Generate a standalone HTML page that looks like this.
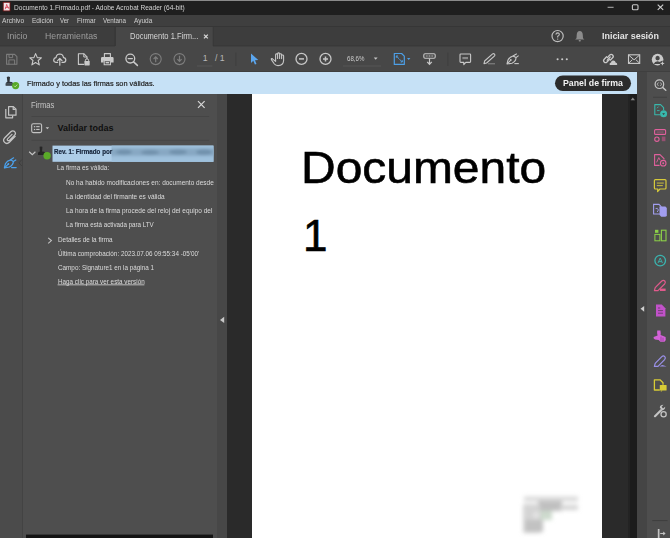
<!DOCTYPE html>
<html><head><meta charset="utf-8">
<style>
*{margin:0;padding:0;box-sizing:border-box}
html,body{width:670px;height:538px;overflow:hidden;background:#2a2a2a;font-family:"Liberation Sans",sans-serif;position:relative}
.a{position:absolute}
#topline{left:0;top:0;width:670px;height:1px;background:#8a8a8a}
#title{left:0;top:1px;width:670px;height:14px;background:#1f1f1f}
#menu{left:0;top:15px;width:670px;height:11px;background:#3f3f3f}
#tabs{left:0;top:26px;width:670px;height:20px;background:#3d3d3d;border-top:1px solid #363636}
#acttab{left:115.5px;top:27px;width:98px;height:19px;background:#474747}
#tool{left:0;top:46px;width:670px;height:26px;background:#474747}
#notif{left:0;top:72px;width:637px;height:21.5px;background:#c6e1f6}
#rail{left:0;top:93.5px;width:23px;height:445px;background:#4b4b4b;border-right:1px solid #434343}
#panel{left:23px;top:93.5px;width:194px;height:445px;background:#4e4e4e;overflow:hidden}
#strip{left:217px;top:93.5px;width:10px;height:445px;background:#474747}
#page{left:252px;top:93.5px;width:350px;height:445px;background:#fff}
#scroll{left:628.3px;top:93.5px;width:8.9px;height:445px;background:#1c1c1c;border-left:2.5px solid #232323}
#rrail1{left:637px;top:72px;width:10.3px;height:466px;background:#454545}
#rrail{left:647.3px;top:72px;width:23px;height:466px;background:#4e4e4e}
.t{position:absolute;white-space:nowrap;line-height:1;transform-origin:0 0}
svg.i{position:absolute;overflow:visible}
</style></head><body>
<div class="a" id="topline"></div>
<div class="a" id="title"></div>
<div class="a" id="menu"></div>
<div class="a" id="tabs"></div>
<div class="a" id="acttab"></div>
<div class="a" id="tool"></div>
<div class="a" id="notif"></div>
<div class="a" id="rail"></div>
<div class="a" id="panel"></div>
<div class="a" id="strip"></div>
<div class="a" id="page"></div>
<div class="a" id="scroll"></div>
<div class="a" id="rrail1"></div>
<div class="a" id="rrail"></div>
<svg class="i" id="bgsvg" style="left:0;top:0" width="670" height="538" viewBox="0 0 670 538">
<!-- tab borders -->
<rect x="114.6" y="27" width="1" height="19" fill="#363636"/>
<rect x="212.8" y="27" width="1" height="19" fill="#363636"/>
<rect x="0" y="45.4" width="115" height="1" fill="#383838"/>
<rect x="213" y="45.4" width="457" height="1" fill="#383838"/>
<rect x="0" y="71.2" width="670" height="0.8" fill="#3e3e3e"/>

<rect x="555" y="75.4" width="76" height="15.5" rx="7.75" fill="#2c2c2c"/>
<!-- highlight -->
<defs><filter id="bl2" x="-50%" y="-50%" width="200%" height="200%"><feGaussianBlur stdDeviation="1.6"/></filter>
<filter id="bl3" x="-50%" y="-50%" width="200%" height="200%"><feGaussianBlur stdDeviation="2.2"/></filter>
<clipPath id="hlclip"><rect x="111.6" y="145.6" width="101.8" height="16.2"/></clipPath></defs>
<rect x="52.5" y="145.6" width="161" height="16.2" fill="#adcde8"/>
<rect x="111.6" y="145.6" width="101.8" height="16.2" fill="#9fc1dc"/>
<g clip-path="url(#hlclip)" filter="url(#bl2)">
<rect x="108" y="148.4" width="110" height="7.4" fill="#87a7c2"/>
<ellipse cx="124" cy="152" rx="8" ry="2.6" fill="#7090ab"/>
<ellipse cx="150" cy="152.4" rx="9" ry="2.4" fill="#7090ab"/>
<ellipse cx="178" cy="152" rx="9" ry="2.6" fill="#7090ab"/>
<ellipse cx="204" cy="152.2" rx="8" ry="2.6" fill="#7090ab"/>
</g>
</svg>
<div class="t" id="t_title" style="left:13.60px;top:4.10px;font-size:7.0px;font-weight:400;color:#d4d4d4;transform:scaleX(0.9392);">Documento 1.Firmado.pdf - Adobe Acrobat Reader (64-bit)</div>
<div class="t" id="m1" style="left:1.80px;top:17.10px;font-size:7.5px;font-weight:400;color:#cfcfcf;transform:scaleX(0.8847);">Archivo</div>
<div class="t" id="m2" style="left:32.00px;top:17.10px;font-size:7.5px;font-weight:400;color:#cfcfcf;transform:scaleX(0.8715);">Edición</div>
<div class="t" id="m3" style="left:60.20px;top:17.10px;font-size:7.5px;font-weight:400;color:#cfcfcf;transform:scaleX(0.8100);">Ver</div>
<div class="t" id="m4" style="left:76.70px;top:17.10px;font-size:7.5px;font-weight:400;color:#cfcfcf;transform:scaleX(0.8649);">Firmar</div>
<div class="t" id="m5" style="left:102.90px;top:17.10px;font-size:7.5px;font-weight:400;color:#cfcfcf;transform:scaleX(0.8365);">Ventana</div>
<div class="t" id="m6" style="left:134.00px;top:17.10px;font-size:7.5px;font-weight:400;color:#cfcfcf;transform:scaleX(0.8667);">Ayuda</div>
<div class="t" id="tab1" style="left:7.00px;top:32.10px;font-size:8.4px;font-weight:400;color:#9c9c9c;transform:scaleX(1.0347);">Inicio</div>
<div class="t" id="tab2" style="left:45.00px;top:32.10px;font-size:8.4px;font-weight:400;color:#9c9c9c;transform:scaleX(1.0429);">Herramientas</div>
<div class="t" id="tab3" style="left:130.00px;top:32.10px;font-size:8.4px;font-weight:400;color:#d6d6d6;transform:scaleX(0.9000);">Documento 1.Firm...</div>
<div class="t" id="signin" style="left:602.00px;top:32.10px;font-size:9.3px;font-weight:700;color:#e4e4e4;transform:scaleX(0.9590);">Iniciar sesión</div>
<div class="t" id="pg1" style="left:202.80px;top:54.10px;font-size:8.7px;font-weight:400;color:#b8b8b8;transform:scaleX(1.0000);">1</div>
<div class="t" id="pg2" style="left:215.00px;top:54.10px;font-size:8.7px;font-weight:400;color:#b8b8b8;transform:scaleX(1.0000);">/ 1</div>
<div class="t" id="zoom" style="left:346.80px;top:55.10px;font-size:7.6px;font-weight:400;color:#cccccc;transform:scaleX(0.8048);">68,6%</div>
<div class="t" id="notif_t" style="left:26.70px;top:80.10px;font-size:8.1px;font-weight:400;color:#222222;transform:scaleX(0.9123);-webkit-text-stroke:0.2px #222;">Firmado y todas las firmas son válidas.</div>
<div class="t" id="panelbtn_t" style="left:562.60px;top:79.10px;font-size:8.4px;font-weight:700;color:#f2f2f2;transform:scaleX(1.0474);">Panel de firma</div>
<div class="t" id="firmas" style="left:31.00px;top:101.10px;font-size:8.6px;font-weight:400;color:#c4c4c4;transform:scaleX(0.8885);">Firmas</div>
<div class="t" id="validar" style="left:57.60px;top:124.10px;font-size:9.0px;font-weight:700;color:#101010;transform:scaleX(1.0000);">Validar todas</div>
<div class="t" id="rev" style="left:54.00px;top:148.10px;font-size:7.0px;font-weight:700;color:#16243a;transform:scaleX(0.8923);-webkit-text-stroke:0.2px #16243a;">Rev. 1: Firmado por</div>
<div class="t" id="l1" style="left:57.40px;top:164.10px;font-size:7.3px;font-weight:400;color:#dcdcdc;transform:scaleX(0.8814);">La firma es válida:</div>
<div style="position:absolute;left:0;top:0;width:213.5px;height:538px;overflow:hidden"><div class="t" id="l2" style="left:66.00px;top:179.10px;font-size:7.3px;font-weight:400;color:#dcdcdc;transform:scaleX(0.8909);">No ha habido modificaciones en: documento desde que se firmó</div></div>
<div class="t" id="l3" style="left:66.00px;top:193.10px;font-size:7.3px;font-weight:400;color:#dcdcdc;transform:scaleX(0.8909);">La identidad del firmante es válida</div>
<div style="position:absolute;left:0;top:0;width:213.5px;height:538px;overflow:hidden"><div class="t" id="l4" style="left:66.00px;top:207.10px;font-size:7.3px;font-weight:400;color:#dcdcdc;transform:scaleX(0.8909);">La hora de la firma procede del reloj del equipo del firmante</div></div>
<div class="t" id="l5" style="left:66.00px;top:221.10px;font-size:7.3px;font-weight:400;color:#dcdcdc;transform:scaleX(0.8531);">La firma está activada para LTV</div>
<div class="t" id="l6" style="left:57.60px;top:236.10px;font-size:7.3px;font-weight:400;color:#dcdcdc;transform:scaleX(0.8742);">Detalles de la firma</div>
<div class="t" id="l7" style="left:58.00px;top:250.10px;font-size:7.3px;font-weight:400;color:#dcdcdc;transform:scaleX(0.8664);">Última comprobación: 2023.07.06 09:55:34 -05'00'</div>
<div class="t" id="l8" style="left:58.00px;top:264.10px;font-size:7.3px;font-weight:400;color:#dcdcdc;transform:scaleX(0.8673);">Campo: Signature1 en la página 1</div>
<div class="t" id="l9" style="left:57.60px;top:278.10px;font-size:7.3px;font-weight:400;color:#dcdcdc;transform:scaleX(0.8650);">Haga clic para ver esta versión</div>
<div class="t" id="doc1" style="left:301.00px;top:145.10px;font-size:45.0px;font-weight:400;color:#000000;transform:scaleX(1.0655);-webkit-text-stroke:0.6px #000;">Documento</div>
<div class="t" id="doc2" style="left:303.00px;top:214.10px;font-size:44.0px;font-weight:400;color:#000000;transform:scaleX(1.0000);-webkit-text-stroke:0.6px #000;">1</div>

<svg class="i" style="left:0;top:0" width="670" height="538" viewBox="0 0 670 538">
<!-- title pdf icon -->
<rect x="3.2" y="2.3" width="6.8" height="8.6" fill="#f2e4e8" stroke="#7a1414" stroke-width="0.8"/>
<path d="M5.2 9.2 Q6.2 6.6 6.7 4.4 Q7.3 7.4 9 8.8 M5.3 7.6 Q7 6.9 9.2 7.4" stroke="#d83a4c" stroke-width="0.8" fill="none"/>
<!-- window controls -->
<rect x="607.6" y="6.8" width="6" height="0.9" fill="#c4c4c4"/>
<rect x="632.4" y="4.7" width="5.6" height="5.1" rx="1" fill="none" stroke="#c8c8c8" stroke-width="1.1"/>
<path d="M657.7 4.6 L663.2 9.9 M663.2 4.6 L657.7 9.9" stroke="#d0d0d0" stroke-width="1.1"/>
<!-- tab close -->
<path d="M204 34.6 L207.8 38.4 M207.8 34.6 L204 38.4" stroke="#d8d8d8" stroke-width="1.3"/>
<!-- help -->
<circle cx="557.6" cy="36.1" r="5.6" fill="none" stroke="#bdbdbd" stroke-width="1.2"/>
<path d="M555.9 34.6 Q556 32.9 557.7 32.9 Q559.4 33 559.3 34.5 Q559.2 35.5 557.7 36.3 L557.7 37.4" stroke="#bdbdbd" stroke-width="1.1" fill="none"/>
<circle cx="557.7" cy="39.1" r="0.7" fill="#bdbdbd"/>
<!-- bell -->
<path d="M579.7 31 Q582.6 31.2 582.8 35 L583 38.2 L584.4 39.6 L575.1 39.6 L576.5 38.2 L576.7 35 Q576.9 31.2 579.7 31 Z" fill="#8c8c8c"/>
<rect x="578.6" y="40" width="2.3" height="1.6" rx="0.8" fill="#8c8c8c"/>

<!-- TOOLBAR -->
<g fill="none" stroke-linejoin="round" stroke-linecap="round">
<!-- save (dim) -->
<path d="M6.6 54.4 H14.6 L16.9 56.7 V64.3 H6.6 Z" stroke="#7c7c7c" stroke-width="1.1"/>
<path d="M9 54.6 V57.6 H12.6 V54.6" stroke="#7c7c7c" stroke-width="1"/>
<path d="M8.9 64.2 V59.9 H14.6 V64.2" stroke="#7c7c7c" stroke-width="1"/>
<!-- star -->
<path d="M35.6 53.6 L37.3 57.6 L41.4 57.8 L38.2 60.5 L39.3 64.9 L35.6 62.5 L31.9 64.9 L33 60.5 L29.8 57.8 L33.9 57.6 Z" stroke="#cacaca" stroke-width="1.1"/>
<!-- cloud upload -->
<path d="M57.6 62.4 H55.8 Q53.6 62.2 53.7 59.9 Q53.9 57.8 56 57.6 Q56.6 54.1 59.8 54 Q62.9 54.1 63.5 57.6 Q65.7 57.8 65.8 59.9 Q65.8 62.2 63.6 62.4 H62" stroke="#cacaca" stroke-width="1.2"/>
<path d="M59.8 65.2 V58.6 M57.6 60.7 L59.8 58.4 L62 60.7" stroke="#cacaca" stroke-width="1.2"/>
<!-- doc lock -->
<path d="M83.6 64.4 H78.4 V53.8 H84 L87 56.8 V58.6" stroke="#cacaca" stroke-width="1.1"/>
<path d="M83.8 54 V57 H86.8" stroke="#cacaca" stroke-width="1"/>
<path d="M85.4 61.2 V60.2 Q85.5 58.8 87 58.8 Q88.5 58.8 88.6 60.2 V61.2" stroke="#cacaca" stroke-width="1"/>
</g>
<rect x="84.4" y="61" width="5.3" height="4.4" rx="0.6" fill="#cacaca"/>
<!-- printer -->
<g fill="none" stroke="#cacaca" stroke-width="1.1" stroke-linejoin="round">
<path d="M104.4 57 V53.6 H110.4 V57"/>
</g>
<path d="M102.2 57 H112.4 Q113.6 57 113.6 58.2 V62.4 H111 V60.4 H103.6 V62.4 H101 V58.2 Q101 57 102.2 57 Z" fill="#cacaca"/>
<path d="M104.2 60.6 H110.4 V64.8 H104.2 Z" fill="none" stroke="#cacaca" stroke-width="1.1"/>
<rect x="105.6" y="61.9" width="3.4" height="1.5" fill="#cacaca"/>
<!-- zoom out magnifier -->
<g fill="none" stroke="#cacaca" stroke-linecap="round">
<circle cx="130.3" cy="58.6" r="4.4" stroke-width="1.3"/>
<path d="M133.6 61.9 L137.4 65.4" stroke-width="1.5"/>
<path d="M128.2 58.6 H132.4" stroke-width="1.3"/>
</g>
<!-- prev/next (dim) -->
<g fill="none" stroke="#7e7e7e">
<circle cx="155.7" cy="59.1" r="5.5" stroke-width="1.1"/>
<circle cx="179.5" cy="59.1" r="5.5" stroke-width="1.1"/>
<path d="M155.7 62.2 V57 M153.6 59 L155.7 56.8 L157.8 59" stroke-width="1.2"/>
<path d="M179.5 55.8 V61.1 M177.4 59.2 L179.5 61.4 L181.6 59.2" stroke-width="1.2"/>
</g>
<!-- page underline & separators -->
<rect x="197" y="65.6" width="15.4" height="0.8" fill="#5a5a5a"/>
<rect x="235.5" y="52.5" width="0.8" height="13.5" fill="#3c3c3c"/>
<rect x="343" y="65.6" width="38" height="0.8" fill="#5a5a5a"/>
<rect x="447.5" y="52.5" width="0.8" height="13.5" fill="#3c3c3c"/>
<!-- select arrow (blue) -->
<path d="M251 53.6 L251 62.9 L253.3 60.8 L254.9 64.6 L256.5 63.9 L255 60.2 L258.3 60 Z" fill="#5ba6ee"/>
<!-- hand -->
<path d="M273.4 59.6 L272.2 58.6 Q271 58.2 271.4 59.6 L274.4 64 Q275.6 65.6 278 65.6 Q283.4 65.6 283.6 60.6 V55.8 Q283.4 54.8 282.4 55 Q281.6 55.2 281.6 56 V58.6 V54.6 Q281.4 53.6 280.4 53.8 Q279.6 54 279.6 54.8 V58.4 V53.8 Q279.4 52.8 278.4 52.9 Q277.6 53 277.6 53.8 V58.4 V54.6 Q277.4 53.8 276.4 53.9 Q275.6 54 275.6 54.8 V61.4 Z" fill="none" stroke="#c6c6c6" stroke-width="1.1" stroke-linejoin="round"/>
<!-- zoom minus/plus circles -->
<g fill="none" stroke="#c6c6c6">
<circle cx="301.5" cy="58.9" r="5.5" stroke-width="1.3"/>
<circle cx="325.5" cy="58.9" r="5.5" stroke-width="1.3"/>
<path d="M299 58.9 H304" stroke-width="1.5"/>
<path d="M323 58.9 H328 M325.5 56.4 V61.4" stroke-width="1.5"/>
</g>
<!-- zoom dropdown tri -->
<path d="M373.8 57.6 H377.6 L375.7 59.8 Z" fill="#c6c6c6"/>
<!-- blue doc view -->
<path d="M394.3 53.5 H401.6 L404.3 56.2 V64.4 H394.3 Z" fill="none" stroke="#4d9fe6" stroke-width="1.2" stroke-linejoin="round"/>
<path d="M396.3 56 L399 58.7 M396.3 56 V57.8 M396.3 56 H398 M402.3 62 L399.5 59.2 M402.3 62 V60.2 M402.3 62 H400.6" stroke="#4d9fe6" stroke-width="1" fill="none"/>
<path d="M407 58 H410.4 L408.7 59.9 Z" fill="#4d9fe6"/>
<!-- scroll/autoscroll -->
<rect x="423.8" y="53.8" width="11.4" height="4.4" rx="1.2" fill="none" stroke="#c8c8c8" stroke-width="1.1"/>
<path d="M425.8 56 H433.2" stroke="#c8c8c8" stroke-width="1" stroke-dasharray="1 0.6"/>
<path d="M429.5 58.4 V64.2 M427.2 61.8 L429.5 64.4 L431.8 61.8" stroke="#c8c8c8" stroke-width="1.2" fill="none"/>
<!-- comment -->
<path d="M460.8 54 H469.8 Q470.6 54 470.6 54.8 V61.6 Q470.6 62.4 469.8 62.4 H465.8 L463.8 64.6 V62.4 H460.8 Q460 62.4 460 61.6 V54.8 Q460 54 460.8 54 Z" fill="none" stroke="#c8c8c8" stroke-width="1.1" stroke-linejoin="round"/>
<rect x="462.4" y="57" width="5.6" height="2.2" fill="#8a8a8a"/>
<!-- pen -->
<path d="M484 63.6 L484.6 61 L492.6 53.9 Q493.6 53.2 494.5 54.1 Q495.3 55 494.6 55.9 L486.6 63 Z" fill="none" stroke="#c8c8c8" stroke-width="1.1" stroke-linejoin="round"/>
<path d="M488 63.8 H495" stroke="#8a8a8a" stroke-width="1"/>
<!-- sign tool -->
<path d="M507 64 L508 60 Q509.5 57 513 56 L516 57.6 Q516 61.6 512 63.2 Z" fill="none" stroke="#c8c8c8" stroke-width="1.1" stroke-linejoin="round"/>
<path d="M513 56 L516.8 53.8 M516 57.6 L518.6 55.6 M507.4 63.6 L510.6 60.4" stroke="#c8c8c8" stroke-width="1.1"/>
<circle cx="510.8" cy="60" r="0.9" fill="#c8c8c8"/>
<path d="M514.4 63.6 H518.8" stroke="#c8c8c8" stroke-width="1.1"/>
<!-- more dots -->
<circle cx="557.6" cy="59.2" r="1.05" fill="#cacaca"/>
<circle cx="562.2" cy="59.2" r="1.05" fill="#cacaca"/>
<circle cx="566.8" cy="59.2" r="1.05" fill="#cacaca"/>
<!-- link cloud -->
<g fill="none" stroke="#cacaca" stroke-width="1.3" stroke-linecap="round">
<path d="M607.4 57.6 L609.8 55 Q611.2 53.6 612.6 55 Q614 56.4 612.6 57.8 L610.4 60"/>
<path d="M609.6 59.4 L607 62 Q605.6 63.4 604.2 62 Q602.8 60.6 604.2 59.2 L606.6 56.8"/>
<path d="M607.2 60.2 L610.2 57"/>
</g>
<path d="M609.8 65 H616.6 Q617.4 65 617.2 64 Q617 62.8 615.8 62.8 Q615.2 60.2 613 60.4 Q611.2 60.6 611 62.4 Q609.6 62.6 609.6 64 Z" fill="#cacaca"/>
<!-- mail -->
<rect x="628.5" y="54.8" width="11.2" height="8.6" fill="none" stroke="#cacaca" stroke-width="1.1"/>
<path d="M628.8 55.2 L634.1 59.8 L639.4 55.2 M628.8 63 L632.4 59.6 M639.4 63 L635.8 59.6" fill="none" stroke="#cacaca" stroke-width="1"/>
<!-- account -->
<circle cx="657.6" cy="59.6" r="5.8" fill="#cacaca"/>
<path d="M657.6 55.8 Q659.8 55.9 659.8 58.2 Q659.8 60.2 657.6 60.4 Q655.4 60.2 655.4 58.2 Q655.4 55.9 657.6 55.8 Z M653.8 64 Q654.6 61.4 657.6 61.3 Q660.6 61.4 661.4 64" fill="#474747"/>
<circle cx="662.4" cy="63.4" r="2.6" fill="#474747"/>
<path d="M662.4 61.6 V65.2 M660.6 63.4 H664.2" stroke="#cacaca" stroke-width="1"/>


<!-- NOTIFICATION -->

<path d="M6.8 77 Q8.4 76.2 10 77 L9.6 81.8 L11.8 82.1 Q13.2 82.5 13.2 84 V85.8 H5.6 V84 Q5.6 82.5 7 82.1 L7.4 81.8 Z" fill="#30363c"/>
<rect x="5.8" y="83.6" width="7" height="0.7" fill="#6a7a88"/>
<circle cx="15.6" cy="85.6" r="3.6" fill="#58a82a"/>
<path d="M14 85.7 L15.2 86.9 L17.3 84.6" stroke="#c8eab0" stroke-width="0.8" fill="none"/>
<!-- LEFT RAIL -->
<g fill="none" stroke="#c4c4c4" stroke-width="1.2" stroke-linejoin="round">
<path d="M8.6 115.2 V106.6 H13.4 L16 109.2 V115.2 Z"/>
<path d="M13.2 106.8 V109.4 H15.8"/>
<path d="M5.8 109 V117.8 H12.6 V115.6"/>
</g>
<path d="M15.2 136.4 L9.4 142.2 Q6.8 144.6 4.6 142.4 Q2.4 140.2 4.8 137.8 L10.8 131.8 Q12.8 130 14.6 131.6 Q16.4 133.4 14.4 135.4 L9.6 140.2 Q8.4 141.2 7.6 140.4 Q6.8 139.6 7.8 138.6 L12 134.4" fill="none" stroke="#c4c4c4" stroke-width="1.3" stroke-linecap="round"/>
<!-- blue sign (active) -->
<g fill="none" stroke="#4ba2ee" stroke-width="1.2" stroke-linejoin="round" stroke-linecap="round">
<path d="M4.4 168 L5.4 163.8 Q7 160.6 10.6 159.8 L13.4 161.4 Q13.2 165.2 9.4 167 Z"/>
<path d="M10.6 159.8 L13.6 157.8 M13.4 161.4 L15.8 160 M4.8 167.6 L8.2 164.2"/>
<path d="M11.6 167.6 H16.2"/>
</g>
<circle cx="8.4" cy="164" r="0.9" fill="#4ba2ee"/>
<!-- PANEL -->
<path d="M198 101.2 L204.6 107.8 M204.6 101.2 L198 107.8" stroke="#d8d8d8" stroke-width="1.2"/>
<rect x="31.5" y="116" width="177.6" height="0.9" fill="#454545"/>
<rect x="31.5" y="139.8" width="177.6" height="0.9" fill="#454545"/>
<rect x="31.7" y="123.7" width="9.9" height="8.9" rx="1.6" fill="none" stroke="#c4c4c4" stroke-width="1.1"/>
<rect x="33.9" y="126.1" width="1.3" height="1.2" fill="#c4c4c4"/>
<rect x="33.9" y="128.9" width="1.3" height="1.2" fill="#c4c4c4"/>
<rect x="36.2" y="126.1" width="3.4" height="1.1" fill="#c4c4c4"/>
<rect x="36.2" y="128.9" width="3.4" height="1.1" fill="#c4c4c4"/>
<path d="M45.6 127.2 H49.2 L47.4 129.3 Z" fill="#c4c4c4"/>
<path d="M29.2 151.8 L32.3 154.6 L35.4 151.8" fill="none" stroke="#c4c4c4" stroke-width="1.2"/>

<!-- sig icon in tree -->
<path d="M39.6 146.8 Q41 146.2 42.4 146.8 L42.1 151.4 L44 151.7 Q45.2 152 45.2 153.4 V155 H38 V153.4 Q38 152 39.2 151.7 L39.9 151.4 Z" fill="#262626"/>
<circle cx="47.1" cy="155.7" r="3.7" fill="#5aaa28"/>

<!-- rail notch -->
<path d="M21.8 159.6 L19 162.8 L21.8 166" fill="none" stroke="#3e3e3e" stroke-width="1"/>
<!-- splitter triangle -->
<path d="M224.2 316.8 V323 L220 319.9 Z" fill="#c8c8c8"/>
<!-- scroll up arrow -->
<path d="M630.6 100.2 H635 L632.8 97.4 Z" fill="#8a8a8a"/>
<!-- bottom black bar in panel -->
<rect x="26" y="534.6" width="187" height="4" fill="#141414"/>
<!-- RIGHT RAIL -->
<g fill="none" stroke="#c4c4c4" stroke-linecap="round">
<circle cx="659.4" cy="84.2" r="4.3" stroke-width="1.2"/>
<path d="M662.6 87.4 L665.8 90.2" stroke-width="1.4"/>
<path d="M658.2 82.8 L657.2 84.2 L658.2 85.6 M660.6 82.8 L661.6 84.2 L660.6 85.6" stroke-width="0.8"/>
</g>
<rect x="653" y="96.8" width="14" height="0.8" fill="#3c3c3c"/>
<!-- teal doc+circle -->
<path d="M660.4 114.8 H654.8 V104.6 H660.6 L663.6 107.6 V110" fill="none" stroke="#38b8ac" stroke-width="1.1" stroke-linejoin="round"/>
<path d="M657 110.6 H659.6 M657 108.2 L658.6 106.6" stroke="#38b8ac" stroke-width="0.9"/>
<circle cx="663.6" cy="113.8" r="3.5" fill="#38b8ac"/>
<path d="M662.2 113.3 H665 L663.6 114.9 Z" fill="#3a3a3a"/>
<!-- pink form -->
<rect x="654.6" y="129.6" width="11" height="4.8" rx="1" fill="none" stroke="#e0609c" stroke-width="1.1"/>
<rect x="656.6" y="131.6" width="7" height="0.9" fill="#e0609c" opacity="0.6"/>
<circle cx="656.9" cy="139.2" r="2.2" fill="none" stroke="#e0609c" stroke-width="1.1"/>
<rect x="661.8" y="136.6" width="3.6" height="4.6" fill="#a8507a" opacity="0.8"/>
<!-- pink doc+ -->
<path d="M659.6 165.4 H654.6 V154.6 H660 L664 158.6 V159.6" fill="none" stroke="#e0609c" stroke-width="1.1" stroke-linejoin="round"/>
<path d="M656.6 162.4 L658.8 157.6 L660 160" stroke="#e0609c" stroke-width="0.9" fill="none"/>
<circle cx="663.2" cy="163.2" r="2.8" fill="none" stroke="#e0609c" stroke-width="1.1"/>
<circle cx="663.2" cy="163.2" r="1" fill="#e0609c"/>
<!-- yellow comment -->
<path d="M655.4 179.6 H665 Q666 179.6 666 180.6 V188 Q666 189 665 189 H660 L657.6 191.6 L657.8 189 H655.4 Q654.4 189 654.4 188 V180.6 Q654.4 179.6 655.4 179.6 Z" fill="none" stroke="#d6ca3a" stroke-width="1.2" stroke-linejoin="round"/>
<rect x="656.8" y="182.6" width="7" height="0.9" fill="#d6ca3a"/>
<rect x="656.8" y="185.2" width="6" height="0.9" fill="#d6ca3a"/>
<!-- purple pages -->
<path d="M653.6 204.4 H659 L661 206.4 V214 H653.6 Z" fill="none" stroke="#a29ef0" stroke-width="1.1"/>
<path d="M659.4 206.6 H665.4 L666.8 208 V215.4 Q666.6 216.8 664.8 216.8 H661.2 L659.6 215 Z" fill="#a29ef0"/>
<path d="M655.6 208.6 Q657.6 207.4 658.4 210 L657.2 212" stroke="#a29ef0" stroke-width="0.9" fill="none"/>
<!-- green organize -->
<rect x="654.9" y="234.4" width="5" height="6.4" fill="none" stroke="#8cd048" stroke-width="1"/>
<rect x="655" y="229.8" width="3.4" height="3" fill="#8cd048"/>
<rect x="661.4" y="230.2" width="4.6" height="10.6" fill="none" stroke="#8cd048" stroke-width="1.1"/>
<!-- teal circle A -->
<circle cx="660.2" cy="260.6" r="5.3" fill="none" stroke="#3ab5b0" stroke-width="1.3"/>
<path d="M658 263 L660.2 258 L662.4 263 M658.8 261.6 H661.6" stroke="#3ab5b0" stroke-width="0.9" fill="none"/>
<!-- pink pen -->
<path d="M654.4 290.6 L655.2 287.6 L661.8 281 Q663.4 279.6 664.8 281 Q666 282.4 664.6 284 L658 290.6 Z" fill="none" stroke="#e05a8c" stroke-width="1.2" stroke-linejoin="round"/>
<rect x="660" y="288.6" width="5.6" height="2.4" fill="#e05a8c"/>
<!-- magenta doc -->
<path d="M656 304.6 H661.8 L665.4 308.2 V316.6 H656 Z" fill="#c152c9"/>
<path d="M658 308 H660.2 M658 310.6 H663 M658 313.2 H663" stroke="#5a3a5e" stroke-width="0.8"/>
<!-- magenta stamp -->
<path d="M657.2 330.4 H660.4 Q661 333 660.6 335 L665.6 337 Q666.4 340 664.6 341.8 H660.4 L658.6 340 L655 339.6 Q653.2 338.6 653.6 337 L657.6 335.6 Q656.8 332.6 657.2 330.4 Z" fill="#d462d8"/>
<path d="M661 336.6 V341 M663 337.6 V341" stroke="#8a3a90" stroke-width="0.7"/>
<!-- purple pen -->
<path d="M654.4 366.4 L655.2 363.4 L661.8 356.6 Q663.4 355.2 664.8 356.6 Q666 358 664.6 359.6 L658 366.4 Z" fill="none" stroke="#9a90e8" stroke-width="1.2" stroke-linejoin="round"/>
<path d="M659.6 366.4 Q662 364 664 365.4 L666.6 366.4 Z" fill="#9a90e8"/>
<!-- yellow doc -->
<path d="M659.8 390 H654.4 V379.8 H660 L663 382.8 V384.8" fill="none" stroke="#d8cc36" stroke-width="1.3" stroke-linejoin="round"/>
<rect x="659.8" y="385" width="6.8" height="5.6" rx="0.6" fill="#d8cc36"/>
<path d="M661 390.4 L660.8 392 L662.6 390.4 Z" fill="#d8cc36"/>
<!-- wrench -->
<path d="M655 416.2 L661 410.2" stroke="#c4c4c4" stroke-width="2.2" stroke-linecap="round"/>
<path d="M659.8 407.6 Q660 404.8 663.4 404.8 L661.6 406.8 L663 408.4 L665.2 406.8 Q665.2 410.2 662 410.4 Z" fill="#c4c4c4"/>
<circle cx="663.6" cy="414.2" r="2.6" fill="none" stroke="#c4c4c4" stroke-width="1.3"/>
<!-- bottom sep + collapse icon -->
<rect x="652.3" y="520.2" width="15.3" height="0.9" fill="#3c3c3c"/>
<rect x="657.8" y="529" width="1.7" height="9" fill="#c4c4c4"/>
<path d="M660.2 533.5 H665" stroke="#c4c4c4" stroke-width="1.1"/>
<path d="M663.2 531.6 L665.6 533.5 L663.2 535.4 Z" fill="#c4c4c4"/>
<!-- page signature blur -->
<g filter="url(#bl3)">
<rect x="524" y="496.5" width="54" height="5" fill="#dadada"/>
<rect x="538" y="501" width="24" height="10" fill="#c0c0c0"/>
<rect x="560" y="505" width="18" height="5" fill="#d4d4d4"/>
<rect x="523" y="504" width="17" height="29" fill="#d4d4d4"/>
<rect x="525" y="520" width="18" height="12" fill="#c2c2c2"/>
<rect x="540" y="511" width="12" height="9" fill="#cddacd"/>
</g>
<circle cx="536" cy="515" r="3" fill="#e6e6e6" filter="url(#bl3)"/>
<!-- link underline -->
<rect x="57.6" y="284.4" width="86.8" height="0.9" fill="#c8c8c8"/>
<!-- detalles chevron -->
<path d="M48.2 237.9 L51.4 240.6 L48.2 243.3" fill="none" stroke="#c4c4c4" stroke-width="1.1"/>
<!-- right splitter triangle -->
<path d="M644.2 305.9 V311.7 L640.5 308.8 Z" fill="#d0d0d0"/>
</svg>

</body></html>
